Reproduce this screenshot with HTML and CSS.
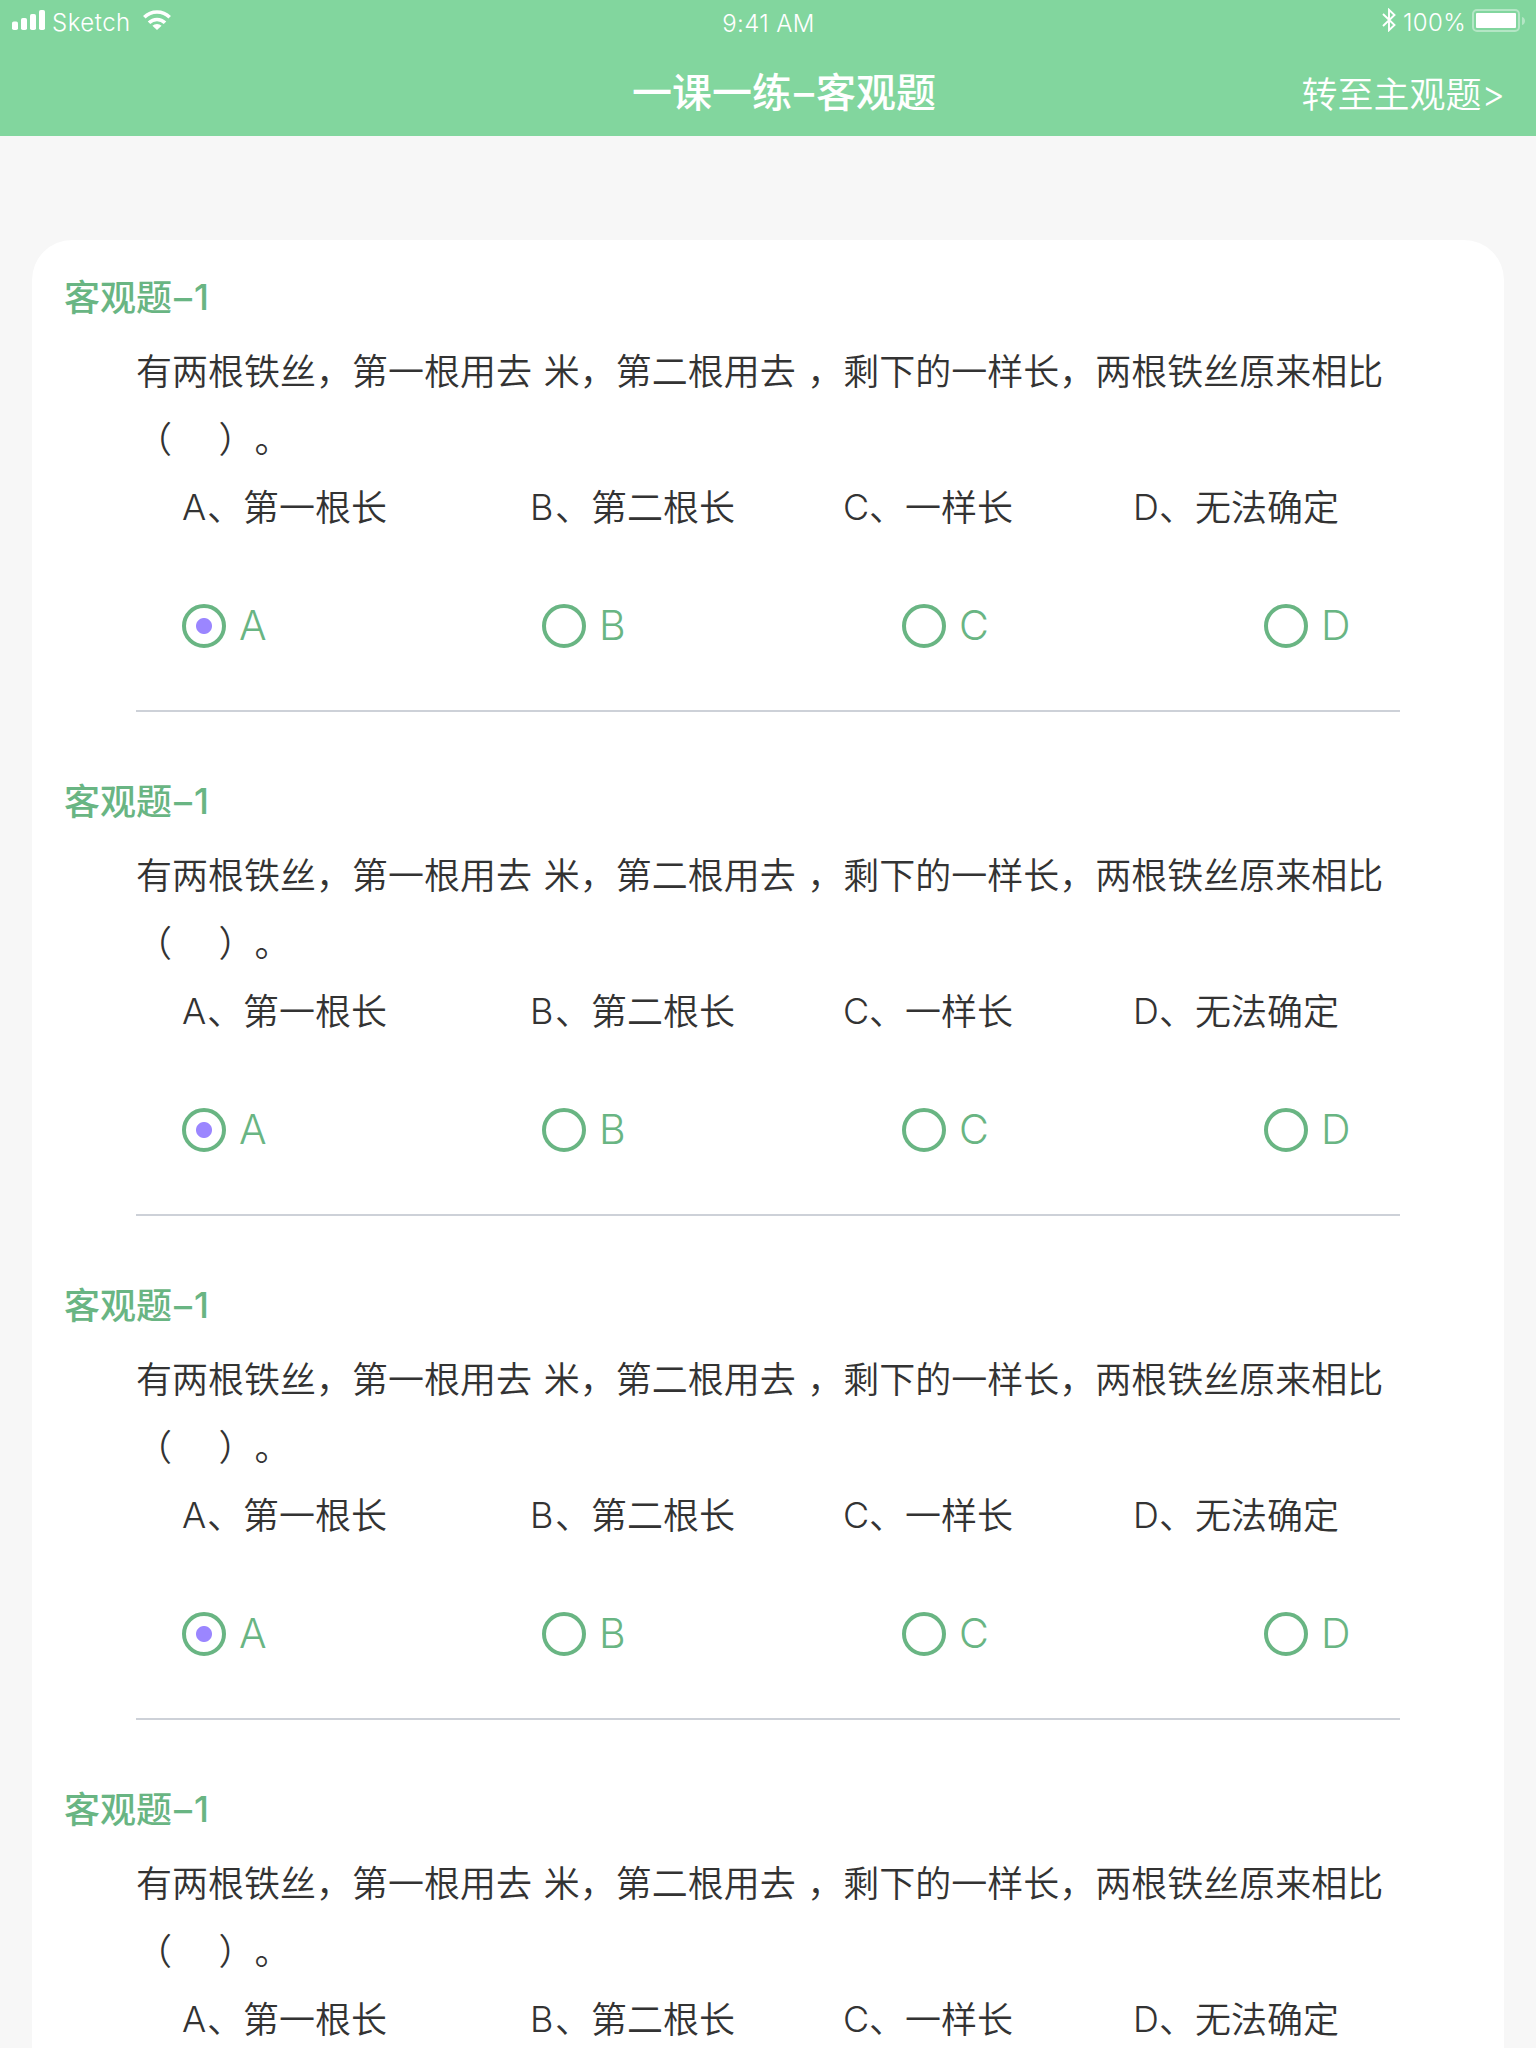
FILE: index.html
```
<!DOCTYPE html>
<html lang="zh-CN">
<head>
<meta charset="utf-8">
<title>一课一练–客观题</title>
<link rel="stylesheet" href="styles.css">
</head>
<body>
<header class="header">
  <div class="status">
    <div class="status-side">
      <svg class="signal" width="34" height="20" viewBox="0 0 34 20" fill="#fff"><rect x="0" y="11.5" width="6" height="8.5" rx="1.8"/><rect x="9" y="8" width="6" height="12" rx="1.8"/><rect x="18" y="4" width="6" height="16" rx="1.8"/><rect x="27" y="0" width="6" height="20" rx="1.8"/></svg>
      <span class="carrier">Sketch</span>
      <svg class="wifi" width="28" height="20" viewBox="0 0 28 20" fill="none" stroke="#fff" stroke-width="3.6"><path d="M1.3 7.2a18 18 0 0 1 25.4 0"/><path d="M6 12.8a11.3 11.3 0 0 1 16 0"/><path d="M14 20l-4.6-4.2a6.5 6.5 0 0 1 9.2 0z" fill="#fff" stroke="none"/></svg>
    </div>
    <span class="clock">9:41 AM</span>
    <div class="status-side status-end">
      <svg class="bluetooth" width="14" height="24" viewBox="0 0 14 24" fill="none" stroke="#fff" stroke-width="1.9"><path d="M1 6l11.5 11L7 22.2V1.8L12.5 7 1 18"/></svg>
      <span class="percent">100%</span>
      <svg class="battery" width="53" height="24" viewBox="0 0 53 24"><rect x="1" y="1" width="46" height="21" rx="4" fill="none" stroke="#fff" stroke-opacity=".4" stroke-width="2"/><rect x="4" y="4" width="40" height="15" rx="1" fill="#fff"/><path d="M50 8c4 1 4 7 0 8z" fill="#fff" fill-opacity=".4"/></svg>
    </div>
  </div>
  <div class="navbar">
    <h1 class="title">一课一练<span class="title-dash">–</span>客观题</h1>
    <a class="switch">转至主观题<span class="latin">&gt;</span></a>
  </div>
</header>
<main class="card">
  <section class="question">
    <h2 class="heading">客观题<span class="dash">–</span><span class="latin">1</span></h2>
    <p class="stem">有两根铁丝，第一根用去 米，第二根用去 ，剩下的一样长，两根铁丝原来相比
（    ）。</p>
    <div class="options"><span><b>A</b>、第一根长</span><span><b>B</b>、第二根长</span><span><b>C</b>、一样长</span><span><b>D</b>、无法确定</span></div>
    <div class="answers"><label class="answer"><i class="radio checked"></i>A</label><label class="answer"><i class="radio"></i>B</label><label class="answer"><i class="radio"></i>C</label><label class="answer"><i class="radio"></i>D</label></div>
  </section>
  <section class="question">
    <h2 class="heading">客观题<span class="dash">–</span><span class="latin">1</span></h2>
    <p class="stem">有两根铁丝，第一根用去 米，第二根用去 ，剩下的一样长，两根铁丝原来相比
（    ）。</p>
    <div class="options"><span><b>A</b>、第一根长</span><span><b>B</b>、第二根长</span><span><b>C</b>、一样长</span><span><b>D</b>、无法确定</span></div>
    <div class="answers"><label class="answer"><i class="radio checked"></i>A</label><label class="answer"><i class="radio"></i>B</label><label class="answer"><i class="radio"></i>C</label><label class="answer"><i class="radio"></i>D</label></div>
  </section>
  <section class="question">
    <h2 class="heading">客观题<span class="dash">–</span><span class="latin">1</span></h2>
    <p class="stem">有两根铁丝，第一根用去 米，第二根用去 ，剩下的一样长，两根铁丝原来相比
（    ）。</p>
    <div class="options"><span><b>A</b>、第一根长</span><span><b>B</b>、第二根长</span><span><b>C</b>、一样长</span><span><b>D</b>、无法确定</span></div>
    <div class="answers"><label class="answer"><i class="radio checked"></i>A</label><label class="answer"><i class="radio"></i>B</label><label class="answer"><i class="radio"></i>C</label><label class="answer"><i class="radio"></i>D</label></div>
  </section>
  <section class="question last">
    <h2 class="heading">客观题<span class="dash">–</span><span class="latin">1</span></h2>
    <p class="stem">有两根铁丝，第一根用去 米，第二根用去 ，剩下的一样长，两根铁丝原来相比
（    ）。</p>
    <div class="options"><span><b>A</b>、第一根长</span><span><b>B</b>、第二根长</span><span><b>C</b>、一样长</span><span><b>D</b>、无法确定</span></div>
  </section>
</main>
</body>
</html>
```
FILE: styles.css
```
* { box-sizing: border-box; margin: 0; padding: 0; }

body {
  height: 2048px;
  overflow: hidden;
  display: flex;
  flex-direction: column;
  background: #f7f7f7;
  color: #333;
  font-family: Inter, "Noto Sans CJK SC", sans-serif;
  text-spacing-trim: space-all;
}

.header {
  flex: none;
  height: 136px;
  background: #82d69e;
  color: #fff;
}

.status {
  height: 40px;
  display: grid;
  grid-template-columns: 1fr auto 1fr;
  padding: 0 11px 0 12px;
  font-size: 24px;
  font-weight: 350;
  line-height: 45px;
}
.status-side { display: flex; align-items: flex-start; }
.status-end { justify-content: flex-end; }
.signal { margin-top: 10px; }
.carrier { width: 97px; padding-left: 6px; letter-spacing: .5px; }
.wifi { margin-top: 10px; }
.clock { line-height: 47px; letter-spacing: .4px; }
.bluetooth { margin: 8px 7px 0 0; }
.percent { width: 69px; letter-spacing: .4px; line-height: 46px; }
.battery { margin-top: 9px; }

.navbar {
  height: 96px;
  display: grid;
  grid-template-columns: 1fr auto 1fr;
  align-items: start;
  padding: 0 31px 0 32px;
}
.title {
  grid-column: 2;
  margin-left: 31px;
  font-size: 40px;
  font-weight: 500;
  line-height: 106px;
}
.title-dash, .dash { display: inline-flex; width: 24px; justify-content: center; }
.switch {
  justify-self: end;
  font-size: 36px;
  font-weight: 350;
  line-height: 110px;
}
.latin { position: relative; top: -1px; }

.card {
  height: 1808px;
  margin: 104px 32px 0;
  padding: 33px 32px 0;
  border-radius: 40px 40px 0 0;
  background: #fff;
  overflow: hidden;
}

.question { height: 504px; font-size: 36px; }
.last { height: auto; }
.heading {
  color: #69b583;
  font-size: 36px;
  font-weight: 500;
  line-height: 50px;
}
.dash { width: 22px; }
.stem {
  margin: 15px 0 0 72px;
  font-weight: 350;
  line-height: 68px;
  white-space: pre;
  word-spacing: 1.5px;
}
.options {
  display: grid;
  grid-template-columns: 348px 313px 290px auto;
  margin-left: 118px;
  font-weight: 350;
  line-height: 68px;
}
.options b { display: inline-block; position: relative; top: -1px; width: 25px; font-weight: 350; }
.options span:nth-child(n+3) b { width: 26px; }

.answers {
  display: grid;
  grid-template-columns: 360px 360px 362px auto;
  width: 1264px;
  height: 170px;
  margin-left: 72px;
  padding: 62px 0 0 46px;
  border-bottom: 2px solid #cdd1d8;
}
.answer {
  height: 44px;
  display: flex;
  gap: 13px;
  color: #69b583;
  font-size: 41px;
  font-weight: 350;
  line-height: 42px;
}
.radio {
  width: 44px;
  height: 44px;
  border: 4px solid #69b583;
  border-radius: 50%;
}
.checked { background: radial-gradient(circle, #9b86ff 7.5px, transparent 8.5px); }
```
